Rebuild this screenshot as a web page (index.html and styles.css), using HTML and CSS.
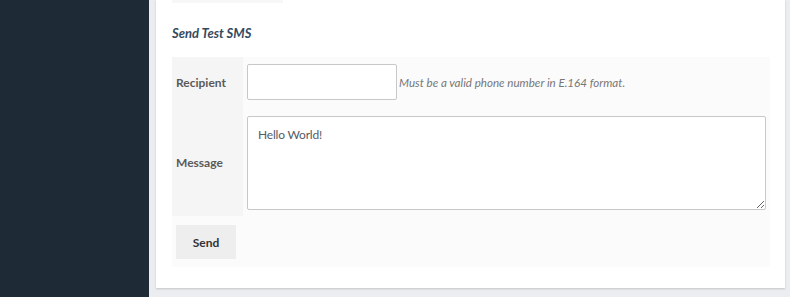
FILE: index.html
```html
<!DOCTYPE html>
<html>
<head>
<meta charset="utf-8">
<link rel="stylesheet" href="styles.css">
</head>
<body>
<div class="layout">
  <aside class="sidebar"></aside>
  <main class="content">
    <section class="card">
      <div class="prev-bar"></div>
      <h3 class="section-title">Send Test SMS</h3>
      <table class="form-table">
        <tr>
          <th class="label-cell">Recipient</th>
          <td class="field-cell row-recipient">
            <input class="text-input" type="text"><span class="help">Must be a valid phone number in E.164 format.</span>
          </td>
        </tr>
        <tr>
          <th class="label-cell">Message</th>
          <td class="field-cell row-message">
            <textarea class="text-area">Hello World!</textarea>
          </td>
        </tr>
        <tr>
          <td class="action-cell" colspan="2">
            <button class="btn">Send</button>
          </td>
        </tr>
      </table>
    </section>
  </main>
</div>
</body>
</html>
```
FILE: styles.css
```css
html, body {
  margin: 0;
  padding: 0;
}
body {
  width: 790px;
  height: 297px;
  overflow: hidden;
  font-family: "Source Sans Pro", Lato, "Noto Sans", sans-serif;
  font-size: 13px;
  color: #555;
  background: #ecedf0;
}
.layout {
  display: flex;
  height: 297px;
}
.sidebar {
  width: 149px;
  flex: none;
  background: #1e2b37;
}
.content {
  flex: 1;
  padding: 0 5px 0 7px;
}
.card {
  background: #fff;
  height: 288px;
  box-sizing: border-box;
  padding: 0 15px 0 16px;
  box-shadow: 0 1px 2px rgba(0, 0, 0, 0.18);
}
.prev-bar {
  width: 111px;
  height: 3px;
  background: #f7f7f7;
}
.section-title {
  margin: 0;
  padding-top: 20px;
  height: 34px;
  font-size: 13px;
  font-style: italic;
  font-weight: 700;
  color: #34495e;
  line-height: 20px;
}
.form-table {
  width: 598px;
  border-collapse: collapse;
  background: #fbfbfb;
}
.label-cell {
  width: 67px;
  background: #f5f5f5;
  text-align: left;
  font-size: 12px;
  font-weight: 700;
  color: #5a5a5a;
  padding: 0 0 0 4px;
  vertical-align: middle;
}
.field-cell {
  padding: 0 4px;
}
.row-recipient {
  height: 51px;
  padding-top: 7px;
  padding-bottom: 8px;
  box-sizing: border-box;
}
.row-message {
  height: 108px;
  padding-top: 8px;
  padding-bottom: 6px;
  box-sizing: border-box;
}
.text-input {
  width: 150px;
  height: 36px;
  box-sizing: border-box;
  border: 1px solid #c8c8c8;
  border-radius: 2px;
  background: #fff;
  vertical-align: middle;
  margin: 0;
}
.help {
  font-size: 11.6px;
  font-style: italic;
  color: #777;
  margin-left: 2px;
  vertical-align: middle;
}
.text-area {
  display: block;
  width: 519px;
  height: 94px;
  box-sizing: border-box;
  border: 1px solid #c8c8c8;
  border-radius: 2px;
  padding: 10px 10px;
  margin: 0;
  font-family: inherit;
  font-size: 12px;
  letter-spacing: -0.2px;
  color: #555b66;
  background: #fff;
}
.action-cell {
  height: 51px;
  padding: 9px 4px 8px;
  box-sizing: border-box;
}
.btn {
  display: block;
  width: 60px;
  height: 34px;
  border: 0;
  border-radius: 0;
  background: #eeeeee;
  font-family: inherit;
  font-size: 12px;
  font-weight: 700;
  color: #333;
  padding: 0;
}
```
